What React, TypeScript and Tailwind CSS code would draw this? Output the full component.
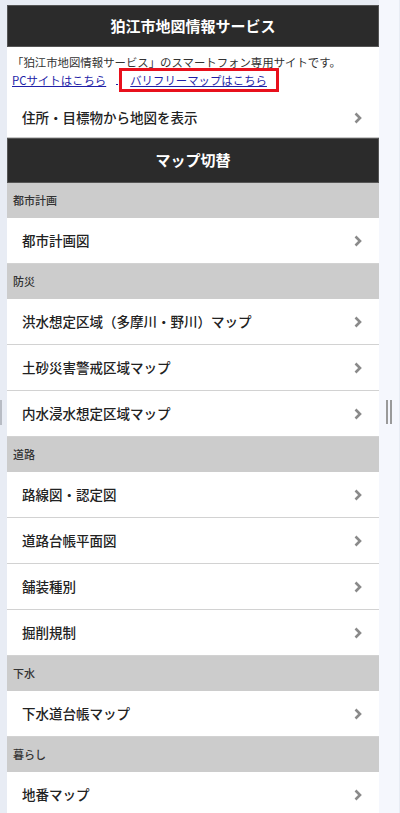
import React from 'react';

type Section = {
  category: string;
  items: string[];
};

const sections: Section[] = [
  { category: '都市計画', items: ['都市計画図'] },
  {
    category: '防災',
    items: ['洪水想定区域（多摩川・野川）マップ', '土砂災害警戒区域マップ', '内水浸水想定区域マップ'],
  },
  { category: '道路', items: ['路線図・認定図', '道路台帳平面図', '舗装種別', '掘削規制'] },
  { category: '下水', items: ['下水道台帳マップ'] },
  { category: '暮らし', items: ['地番マップ'] },
];

const font = { fontFamily: '"Noto Sans CJK JP", "Noto Sans", sans-serif' };

const Chevron: React.FC = () => (
  <svg width="10" height="12" viewBox="0 0 10 12" className="shrink-0">
    <polyline points="2.5,1.5 7,6 2.5,10.5" fill="none" stroke="#8a8a8a" strokeWidth="2.6" />
  </svg>
);

const MenuRow: React.FC<{ label: string }> = ({ label }) => (
  <div className="flex h-[46px] items-center justify-between border-b border-[#d2d2d2] bg-white pl-[15px] pr-[16px]">
    <span className="text-[13.5px] font-medium text-[#222]">{label}</span>
    <Chevron />
  </div>
);

const App: React.FC = () => {
  return (
    <div className="flex h-[813px] w-[400px] overflow-hidden bg-[#e8ecf4]" style={font}>
      {/* left gutter */}
      <div className="relative w-[7px] shrink-0">
        <div className="absolute left-0 top-[400px] h-[25px] w-[2px] bg-[#b8bcc4]" />
      </div>

      {/* main column */}
      <div className="mt-[5px] w-[372px] shrink-0 bg-white">
        <div className="flex h-[42px] items-center justify-center border border-[#555] bg-[#2b2b2b]">
          <h1 className="text-[15px] font-bold text-white">狛江市地図情報サービス</h1>
        </div>

        <div className="px-[5px] pt-[6px] text-[11.4px] leading-[18px]">
          <p className="text-[#333]">「狛江市地図情報サービス」のスマートフォン専用サイトです。</p>
          <div className="flex items-center">
            <a className="text-[#1f1fa8] underline">PCサイトはこちら</a>
            <span className="mb-[4px] ml-[10px] mr-[1px] h-[1px] w-[2px] self-end bg-[#1f1fa8]" />
            <a className="-my-[3px] border-[3px] border-[#e8101c] pl-[8px] pr-[9px] leading-[18px] text-[#1f1fa8] underline">
              バリフリーマップはこちら
            </a>
          </div>
        </div>

        <div className="mt-[9px] flex h-[40px] items-center justify-between border-b border-[#c8c8c8] bg-white pl-[15px] pr-[16px]">
          <span className="text-[13.5px] font-medium text-[#222]">住所・目標物から地図を表示</span>
          <Chevron />
        </div>

        <div className="flex h-[45px] items-center justify-center border border-[#555] bg-[#2b2b2b]">
          <h2 className="text-[15px] font-bold text-white">マップ切替</h2>
        </div>

        {sections.map((section) => (
          <div key={section.category}>
            <div className="flex h-[35px] items-center bg-[#cccccc] px-[6px]">
              <span className="text-[11px] font-medium text-[#333]">{section.category}</span>
            </div>
            {section.items.map((item) => (
              <MenuRow key={item} label={item} />
            ))}
          </div>
        ))}
      </div>

      {/* right panel */}
      <div className="relative w-[20px] shrink-0 bg-[#f5f7fd]">
        <div className="absolute left-[7px] top-[400px] flex h-[24px] gap-[2px]">
          <div className="w-[2px] bg-[#9a9a9a]" />
          <div className="w-[2px] bg-[#9a9a9a]" />
        </div>
      </div>
    </div>
  );
};

export default App;
